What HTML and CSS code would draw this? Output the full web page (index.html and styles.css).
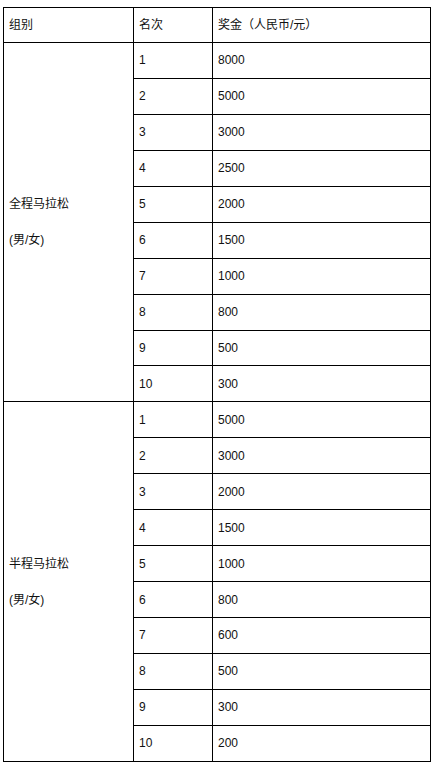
FILE: index.html
```html
<!DOCTYPE html>
<html lang="zh">
<head>
<meta charset="utf-8">
<link rel="stylesheet" href="styles.css">
</head>
<body>
<div class="wrap">
<table class="prize">
  <colgroup>
    <col class="c-group">
    <col class="c-rank">
    <col class="c-money">
  </colgroup>
  <thead>
    <tr class="head"><td>组别</td><td>名次</td><td>奖金（人民币/元）</td></tr>
  </thead>
  <tbody>
    <tr><td rowspan="10" class="group"><p>全程马拉松</p><p>(男/女)</p></td><td>1</td><td>8000</td></tr>
    <tr><td>2</td><td>5000</td></tr>
    <tr><td>3</td><td>3000</td></tr>
    <tr><td>4</td><td>2500</td></tr>
    <tr><td>5</td><td>2000</td></tr>
    <tr><td>6</td><td>1500</td></tr>
    <tr><td>7</td><td>1000</td></tr>
    <tr><td>8</td><td>800</td></tr>
    <tr><td>9</td><td>500</td></tr>
    <tr><td>10</td><td>300</td></tr>
    <tr><td rowspan="10" class="group"><p>半程马拉松</p><p>(男/女)</p></td><td>1</td><td>5000</td></tr>
    <tr><td>2</td><td>3000</td></tr>
    <tr><td>3</td><td>2000</td></tr>
    <tr><td>4</td><td>1500</td></tr>
    <tr><td>5</td><td>1000</td></tr>
    <tr><td>6</td><td>800</td></tr>
    <tr><td>7</td><td>600</td></tr>
    <tr><td>8</td><td>500</td></tr>
    <tr><td>9</td><td>300</td></tr>
    <tr><td>10</td><td>200</td></tr>
  </tbody>
</table>
</div>
</body>
</html>
```

FILE: styles.css
```css
html, body {
  margin: 0;
  padding: 0;
  background: #fff;
}
.wrap {
  padding: 7px 3px 0 3px;
}
.prize {
  border-collapse: collapse;
  width: 427px;
  table-layout: fixed;
  font-family: "Liberation Sans", "Noto Sans CJK SC", sans-serif;
  font-size: 12px;
  color: #111;
}
.c-group { width: 130px; }
.c-rank { width: 79px; }
.c-money { width: 218px; }
.prize td {
  border: 1px solid #000;
  padding: 0 5px;
  height: 34.95px;
  line-height: 16px;
  vertical-align: middle;
  text-align: left;
}
.prize .head td {
  height: 34px;
}
.prize td.group p {
  margin: 0;
  line-height: 36px;
}
```
